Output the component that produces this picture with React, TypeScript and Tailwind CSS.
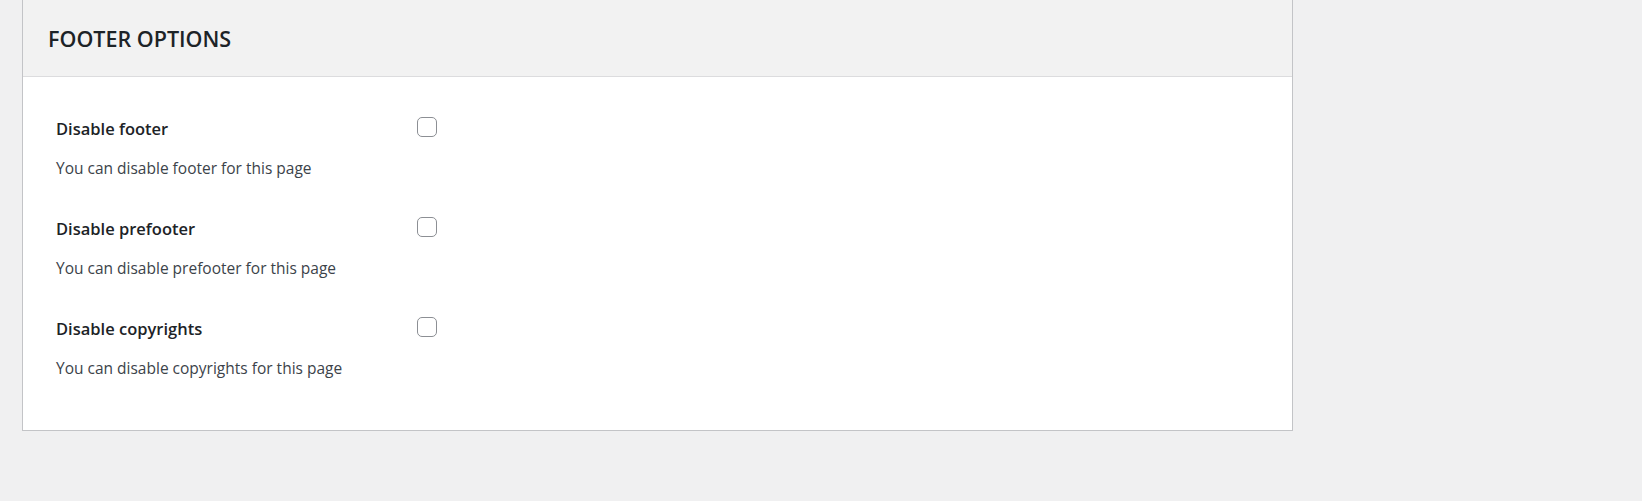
const options = [
  { label: "Disable footer", help: "You can disable footer for this page" },
  { label: "Disable prefooter", help: "You can disable prefooter for this page" },
  { label: "Disable copyrights", help: "You can disable copyrights for this page" },
];

function OptionRow({ label, help }: { label: string; help: string }) {
  return (
    <div className="flex items-start">
      <div className="w-[361px] shrink-0">
        <div className="text-[16.5px] leading-[24px] font-semibold text-[#1d2327]">{label}</div>
        <p className="mt-[15px] text-[15.5px] leading-[24px] text-[#3c434a]">{help}</p>
      </div>
      <input
        type="checkbox"
        className="size-[20px] appearance-none rounded-[5px] border border-[#8c8f94] bg-white"
      />
    </div>
  );
}

export default function App() {
  return (
    <div
      className="min-h-screen bg-[#f0f0f1] pl-[22px]"
      style={{ fontFamily: '"Open Sans", "Noto Sans", sans-serif' }}
    >
      <div className="w-[1271px] border-x border-b border-[#c3c4c7] bg-white">
        <div className="flex h-[77px] items-center border-b border-[#dcdcde] bg-[#f2f2f2] pl-[25px] pt-[2px]">
          <h2 className="text-[21.5px] font-semibold text-[#1d2327]">FOOTER OPTIONS</h2>
        </div>
        <div className="flex flex-col gap-[37px] pb-[50px] pl-[33px] pt-[40px]">
          {options.map((o) => (
            <OptionRow key={o.label} label={o.label} help={o.help} />
          ))}
        </div>
      </div>
    </div>
  );
}
